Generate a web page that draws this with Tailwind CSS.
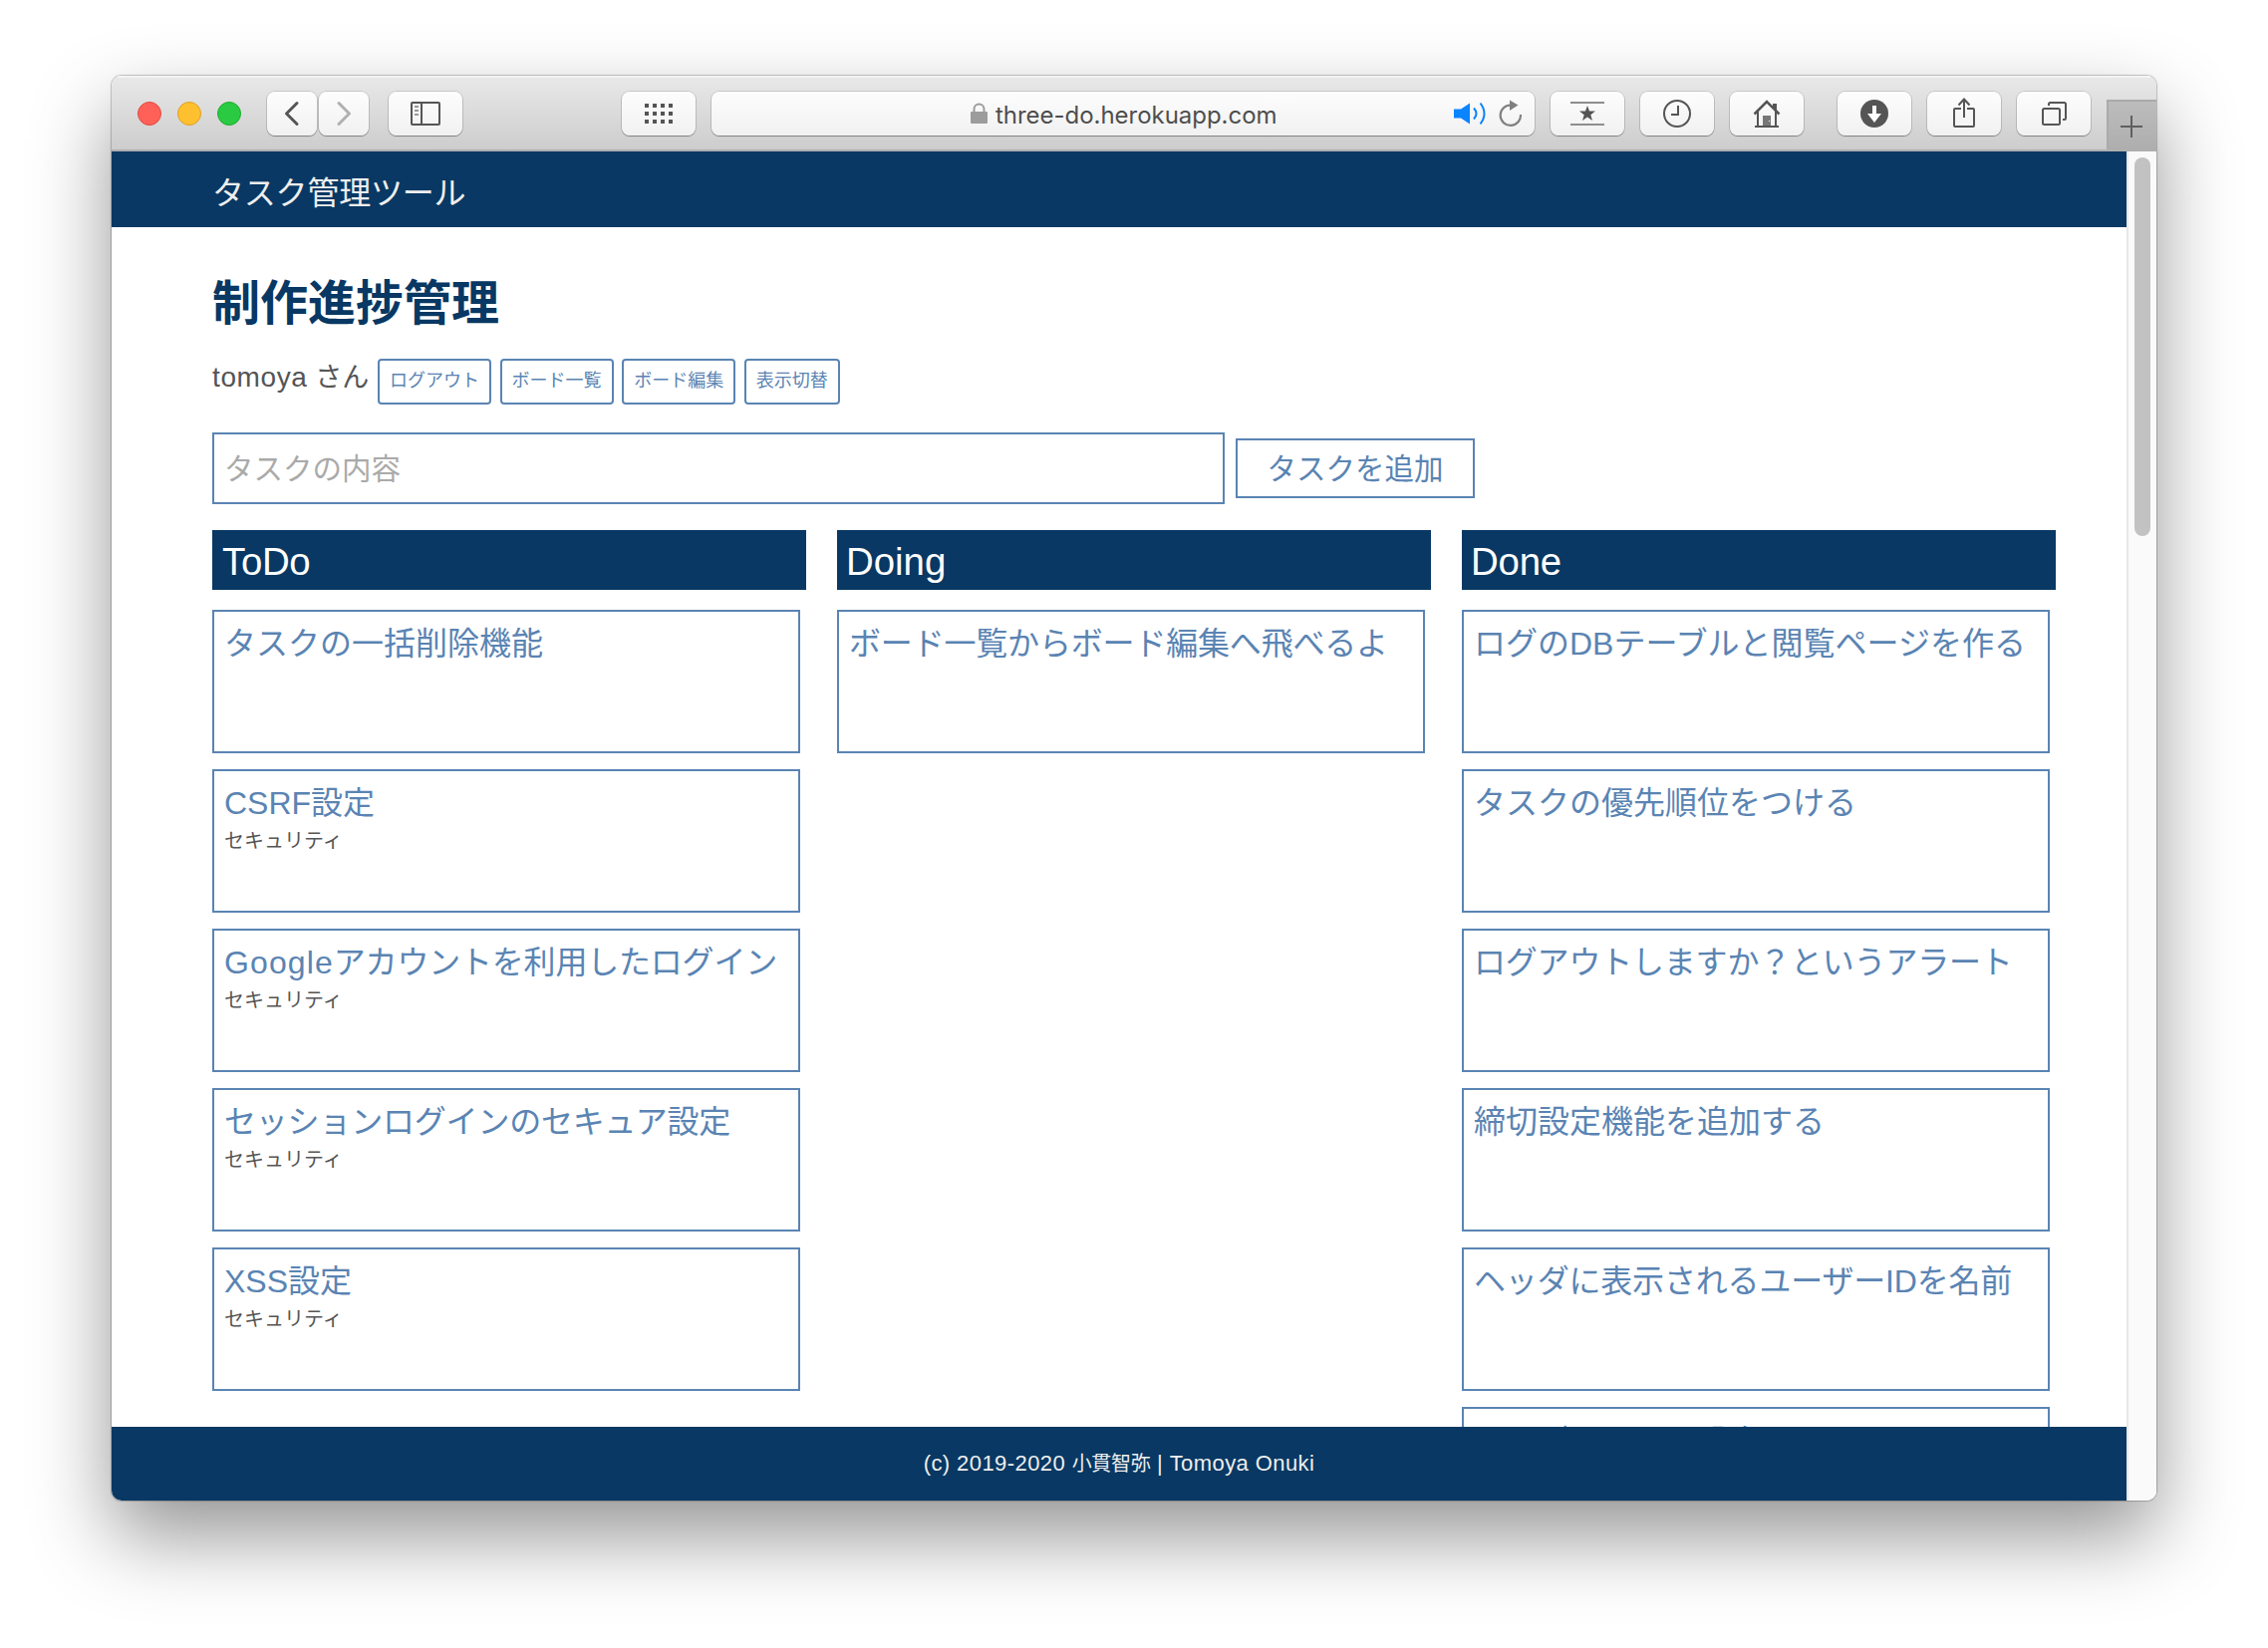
<!DOCTYPE html>
<html lang="ja">
<head>
<meta charset="utf-8">
<title>タスク管理ツール</title>
<script src="https://cdn.jsdelivr.net/npm/@tailwindcss/browser@4"></script>
</head>
<body class="w-[2276px] h-[1654px] overflow-hidden bg-white pt-[76px] pl-[112px] font-['Liberation_Sans','Noto_Sans_CJK_JP',sans-serif]">
<div class="w-[2052px] h-[1430px] rounded-[10px] shadow-[0_0_1px_1px_rgba(0,0,0,0.22),0_36px_80px_rgba(0,0,0,0.42)]">
<div class="w-full h-full rounded-[10px] overflow-hidden flex flex-col bg-white">

  <!-- Browser toolbar -->
  <div class="h-[76px] shrink-0 flex items-start bg-linear-to-b from-[#e8e8e8] to-[#cdcdcd] border-t-2 border-t-[#f3f3f3] border-b-2 border-b-[#afafaf] text-[#555]">
    <div class="flex gap-4 ml-[26px] mt-6">
      <span class="size-6 rounded-full bg-[#ff6159] border border-[#e2493f]"></span>
      <span class="size-6 rounded-full bg-[#ffc02f] border border-[#dfa023]"></span>
      <span class="size-6 rounded-full bg-[#2acb42] border border-[#1bac2c]"></span>
    </div>
    <div class="flex gap-0.5 ml-[26px] mt-[14px]">
      <div class="w-[50px] h-11 rounded-lg bg-linear-to-b from-[#fdfdfd] to-[#f1f1f1] shadow-[0_0_0_1px_rgba(0,0,0,0.12),0_1px_1px_rgba(0,0,0,0.3)] flex items-center justify-center">
        <svg width="50" height="44" fill="none" stroke="#555" stroke-width="3" stroke-linecap="round" stroke-linejoin="round"><path d="M30 11.500L19.500 22L30 32.500"/></svg>
      </div>
      <div class="w-[50px] h-11 rounded-lg bg-linear-to-b from-[#fdfdfd] to-[#f1f1f1] shadow-[0_0_0_1px_rgba(0,0,0,0.12),0_1px_1px_rgba(0,0,0,0.3)] flex items-center justify-center">
        <svg width="50" height="44" fill="none" stroke="#b0b0b0" stroke-width="3" stroke-linecap="round" stroke-linejoin="round"><path d="M20 11.500L30.500 22L20 32.500"/></svg>
      </div>
    </div>
    <div class="w-[74px] h-11 ml-5 mt-[14px] rounded-lg bg-linear-to-b from-[#fdfdfd] to-[#f1f1f1] shadow-[0_0_0_1px_rgba(0,0,0,0.12),0_1px_1px_rgba(0,0,0,0.3)]">
      <svg width="74" height="44" fill="none" stroke="#555" stroke-width="2"><rect x="23" y="11" width="28" height="22" rx="1"/><path d="M33 11V33"/><path d="M26 15H30M26 19H30M26 23H30" stroke="#999"/></svg>
    </div>
    <div class="w-[74px] h-11 ml-40 mt-[14px] rounded-lg bg-linear-to-b from-[#fdfdfd] to-[#f1f1f1] shadow-[0_0_0_1px_rgba(0,0,0,0.12),0_1px_1px_rgba(0,0,0,0.3)]">
      <svg width="74" height="44" stroke="#555" stroke-width="4" stroke-dasharray="4 4"><path d="M23 14H51M23 22H51M23 30H51"/></svg>
    </div>
    <div class="w-[826px] h-11 ml-4 mt-[14px] pl-[260px] pr-[12px] rounded-lg bg-linear-to-b from-[#fdfdfd] to-[#f1f1f1] shadow-[0_0_0_1px_rgba(0,0,0,0.12),0_1px_1px_rgba(0,0,0,0.3)] flex items-center">
      <svg width="17" height="22" class="mr-2 shrink-0"><rect x="0" y="9" width="17" height="12" rx="1" fill="#9c9c9c"/><path d="M3.500 10V6.500a5 5 0 0 1 10 0V10" fill="none" stroke="#9c9c9c" stroke-width="2"/></svg>
      <span class="font-['Inter'] text-[24px] tracking-[-0.03px] leading-[42px] text-[#4e4e4e] whitespace-nowrap pt-1">three-do.herokuapp.com</span>
      <div class="flex ml-auto gap-3 items-center">
        <svg width="34" height="26" viewBox="0 0 34 26"><path d="M1 8.500H8L17 2.500V23.500L8 17.500H1Z" fill="#0a84ff"/><path d="M21 7.500Q26 13 21 18.500M27.500 2.500Q35.500 13 27.500 23.500" fill="none" stroke="#0a84ff" stroke-width="2"/></svg>
        <svg width="24" height="28" viewBox="0 0 24 28"><path d="M22 15A10.200 10.200 0 1 1 12 5.500" fill="none" stroke="#808080" stroke-width="2.200"/><path d="M11 0.500L19.500 5.500L11 11Z" fill="#808080"/></svg>
      </div>
    </div>
    <div class="flex gap-4 ml-4 mt-[14px]">
      <div class="w-[74px] h-11 rounded-lg bg-linear-to-b from-[#fdfdfd] to-[#f1f1f1] shadow-[0_0_0_1px_rgba(0,0,0,0.12),0_1px_1px_rgba(0,0,0,0.3)]">
        <svg width="74" height="44"><path d="M20 11H54M20 33H54" stroke="#8e8e8e" stroke-width="2"/><path d="M37 14L39 19.600H45L40.300 23.200L42 29L37 25.500L32 29L33.700 23.200L29 19.600H35Z" fill="#555"/></svg>
      </div>
      <div class="w-[74px] h-11 rounded-lg bg-linear-to-b from-[#fdfdfd] to-[#f1f1f1] shadow-[0_0_0_1px_rgba(0,0,0,0.12),0_1px_1px_rgba(0,0,0,0.3)]">
        <svg width="74" height="44" fill="none" stroke="#555" stroke-width="2"><circle cx="37" cy="22" r="13"/><path d="M38 14V23H31"/></svg>
      </div>
      <div class="w-[74px] h-11 rounded-lg bg-linear-to-b from-[#fdfdfd] to-[#f1f1f1] shadow-[0_0_0_1px_rgba(0,0,0,0.12),0_1px_1px_rgba(0,0,0,0.3)]">
        <svg width="74" height="44" fill="none" stroke="#555" stroke-width="2"><path d="M24.500 22.500L37 10L49.500 22.500" stroke-width="2.500"/><path d="M28 20V35M46 20V35M25 35H49"/><path d="M43 12H47V19L43 15Z" fill="#555" stroke="none"/><rect x="33" y="24" width="8" height="10" fill="#777" stroke="none"/><rect x="39" y="29" width="1" height="1" fill="#fff" stroke="none"/></svg>
      </div>
    </div>
    <div class="flex gap-4 ml-[34px] mt-[14px]">
      <div class="w-[74px] h-11 rounded-lg bg-linear-to-b from-[#fdfdfd] to-[#f1f1f1] shadow-[0_0_0_1px_rgba(0,0,0,0.12),0_1px_1px_rgba(0,0,0,0.3)]">
        <svg width="74" height="44"><circle cx="37" cy="22" r="14" fill="#555"/><path d="M35 14H39V22H44L37 31L30 22H35Z" fill="#fff"/></svg>
      </div>
      <div class="w-[74px] h-11 rounded-lg bg-linear-to-b from-[#fdfdfd] to-[#f1f1f1] shadow-[0_0_0_1px_rgba(0,0,0,0.12),0_1px_1px_rgba(0,0,0,0.3)]">
        <svg width="74" height="44" fill="none" stroke="#555" stroke-width="2"><path d="M34 17H28Q27 17 27 18V34Q27 35 28 35H46Q47 35 47 34V18Q47 17 46 17H40"/><path d="M37 26V8M31.500 13.500L37 7.500L42.500 13.500"/></svg>
      </div>
      <div class="w-[74px] h-11 rounded-lg bg-linear-to-b from-[#fdfdfd] to-[#f1f1f1] shadow-[0_0_0_1px_rgba(0,0,0,0.12),0_1px_1px_rgba(0,0,0,0.3)]">
        <svg width="74" height="44" fill="none" stroke="#555" stroke-width="2"><rect x="26" y="17" width="17" height="16" rx="1.500"/><path d="M32 14V12.500Q32 11 33.500 11H47.500Q49 11 49 12.500V26.500Q49 28 47.500 28H46"/></svg>
      </div>
    </div>
    <div class="w-[50px] h-[50px] ml-4 mt-[22px] bg-linear-to-b from-[#bcbcbc] to-[#aeaeae] border-l-2 border-t-2 border-[#aaa]">
      <svg width="48" height="48" stroke="#606060" stroke-width="2"><path d="M12 25H34M23 14V36"/></svg>
    </div>
  </div>

  <!-- Page viewport -->
  <div class="flex-1 min-h-0 flex">
    <div class="w-[2022px] flex flex-col text-[#555]">
      <header class="h-[76px] shrink-0 bg-[#083863] pl-[101px] pt-[7px] text-[32px] text-[#eee] flex items-start"><span class="leading-[71px] tracking-[-0.2px]">タスク管理ツール</span></header>

      <main class="flex-1 min-h-0 overflow-hidden pl-[101px]">
        <h1 class="mt-[41px] h-[72px] text-[48px] leading-[72px] font-bold text-[#083863]">制作進捗管理</h1>

        <div class="mt-[19px] h-[46px] flex items-start">
          <span class="w-[166px] text-[28px] leading-[38px] whitespace-nowrap"><span class="tracking-[0.6px]">tomoya</span> <span class="text-[27px]">さん</span></span>
          <div class="flex gap-[8.6px] text-[18px] leading-[38px] text-[#5a84b3]">
            <button class="w-[114px] h-[46px] pb-[3px] border-2 border-[#5a84b3] rounded">ログアウト</button>
            <button class="w-[114px] h-[46px] pb-[3px] border-2 border-[#5a84b3] rounded">ボード一覧</button>
            <button class="w-[114px] h-[46px] pb-[3px] border-2 border-[#5a84b3] rounded">ボード編集</button>
            <button class="w-[96px] h-[46px] pb-[3px] border-2 border-[#5a84b3] rounded">表示切替</button>
          </div>
        </div>

        <div class="mt-7 flex items-center gap-[11px]">
          <div class="w-[1016px] h-[72px] border-2 border-[#5a84b3] pl-[10px] text-[29.500px] leading-[70px] text-[#aaa]">タスクの内容</div>
          <button class="w-[240px] h-[60px] border-2 border-[#5a84b3] text-[29.500px] leading-[57px] text-[#5a84b3]">タスクを追加</button>
        </div>

        <div class="mt-[26px] flex gap-[31px]">
          <section class="w-[596px]">
            <h2 class="h-[60px] bg-[#083863] text-white text-[38.400px] leading-[64px] pl-[10px] tracking-[-0.3px] mb-5">ToDo</h2>
            <div class="w-[590px] flex flex-col gap-4 text-[32px] leading-[40px] text-[#5a84b3]">
              <div class="h-36 border-2 border-[#5a84b3] pl-[10px] pt-3">タスクの一括削除機能</div>
              <div class="h-36 border-2 border-[#5a84b3] pl-[10px] pt-3">CSRF設定<p class="text-[20px] leading-[36px] text-[#555]">セキュリティ</p></div>
              <div class="h-36 border-2 border-[#5a84b3] pl-[10px] pt-3 tracking-[-0.2px]"><span class="tracking-[1.100px]">Google</span>アカウントを利用したログイン<p class="text-[20px] leading-[36px] tracking-normal text-[#555]">セキュリティ</p></div>
              <div class="h-36 border-2 border-[#5a84b3] pl-[10px] pt-3 tracking-[-0.2px]">セッションログインのセキュア設定<p class="text-[20px] leading-[36px] tracking-normal text-[#555]">セキュリティ</p></div>
              <div class="h-36 border-2 border-[#5a84b3] pl-[10px] pt-3">XSS設定<p class="text-[20px] leading-[36px] text-[#555]">セキュリティ</p></div>
            </div>
          </section>
          <section class="w-[596px]">
            <h2 class="h-[60px] bg-[#083863] text-white text-[38.400px] leading-[64px] pl-[9px] mb-5">Doing</h2>
            <div class="w-[590px] text-[32px] leading-[40px] text-[#5a84b3]">
              <div class="h-36 border-2 border-[#5a84b3] pl-[10px] pt-3 tracking-[-0.18px]">ボード一覧からボード編集へ飛べるよ</div>
            </div>
          </section>
          <section class="w-[596px]">
            <h2 class="h-[60px] bg-[#083863] text-white text-[38.400px] leading-[64px] pl-[9px] tracking-[-0.2px] mb-5">Done</h2>
            <div class="w-[590px] flex flex-col gap-4 text-[32px] leading-[40px] text-[#5a84b3] whitespace-nowrap">
              <div class="h-36 border-2 border-[#5a84b3] pl-[10px] pt-3">ログのDBテーブルと閲覧ページを作る</div>
              <div class="h-36 border-2 border-[#5a84b3] pl-[10px] pt-3">タスクの優先順位をつける</div>
              <div class="h-36 border-2 border-[#5a84b3] pl-[10px] pt-3 tracking-[-0.2px]">ログアウトしますか？というアラート</div>
              <div class="h-36 border-2 border-[#5a84b3] pl-[10px] pt-3">締切設定機能を追加する</div>
              <div class="h-36 border-2 border-[#5a84b3] pl-[10px] pt-3 tracking-[-0.18px]">ヘッダに表示されるユーザーIDを名前</div>
              <div class="h-36 border-2 border-[#5a84b3] pl-[10px] pt-[13px]">ヘッダのリンク設定を開く</div>
            </div>
          </section>
        </div>
      </main>

      <footer class="h-[74px] shrink-0 bg-[#083863] text-[#eee] text-[22px] leading-[73px] text-center tracking-[0.42px]">(c) 2019-2020 <span class="text-[20px] tracking-[-0.3px]">小貫智弥</span> | Tomoya Onuki</footer>
    </div>

    <!-- Scrollbar -->
    <div class="w-[30px] bg-[#fafafa] border-l-2 border-[#e8e8e8] pl-[6px] pt-[6px]">
      <div class="w-4 h-[380px] rounded-full bg-[#c2c2c2]"></div>
    </div>
  </div>
</div>
</div>
</body>
</html>
